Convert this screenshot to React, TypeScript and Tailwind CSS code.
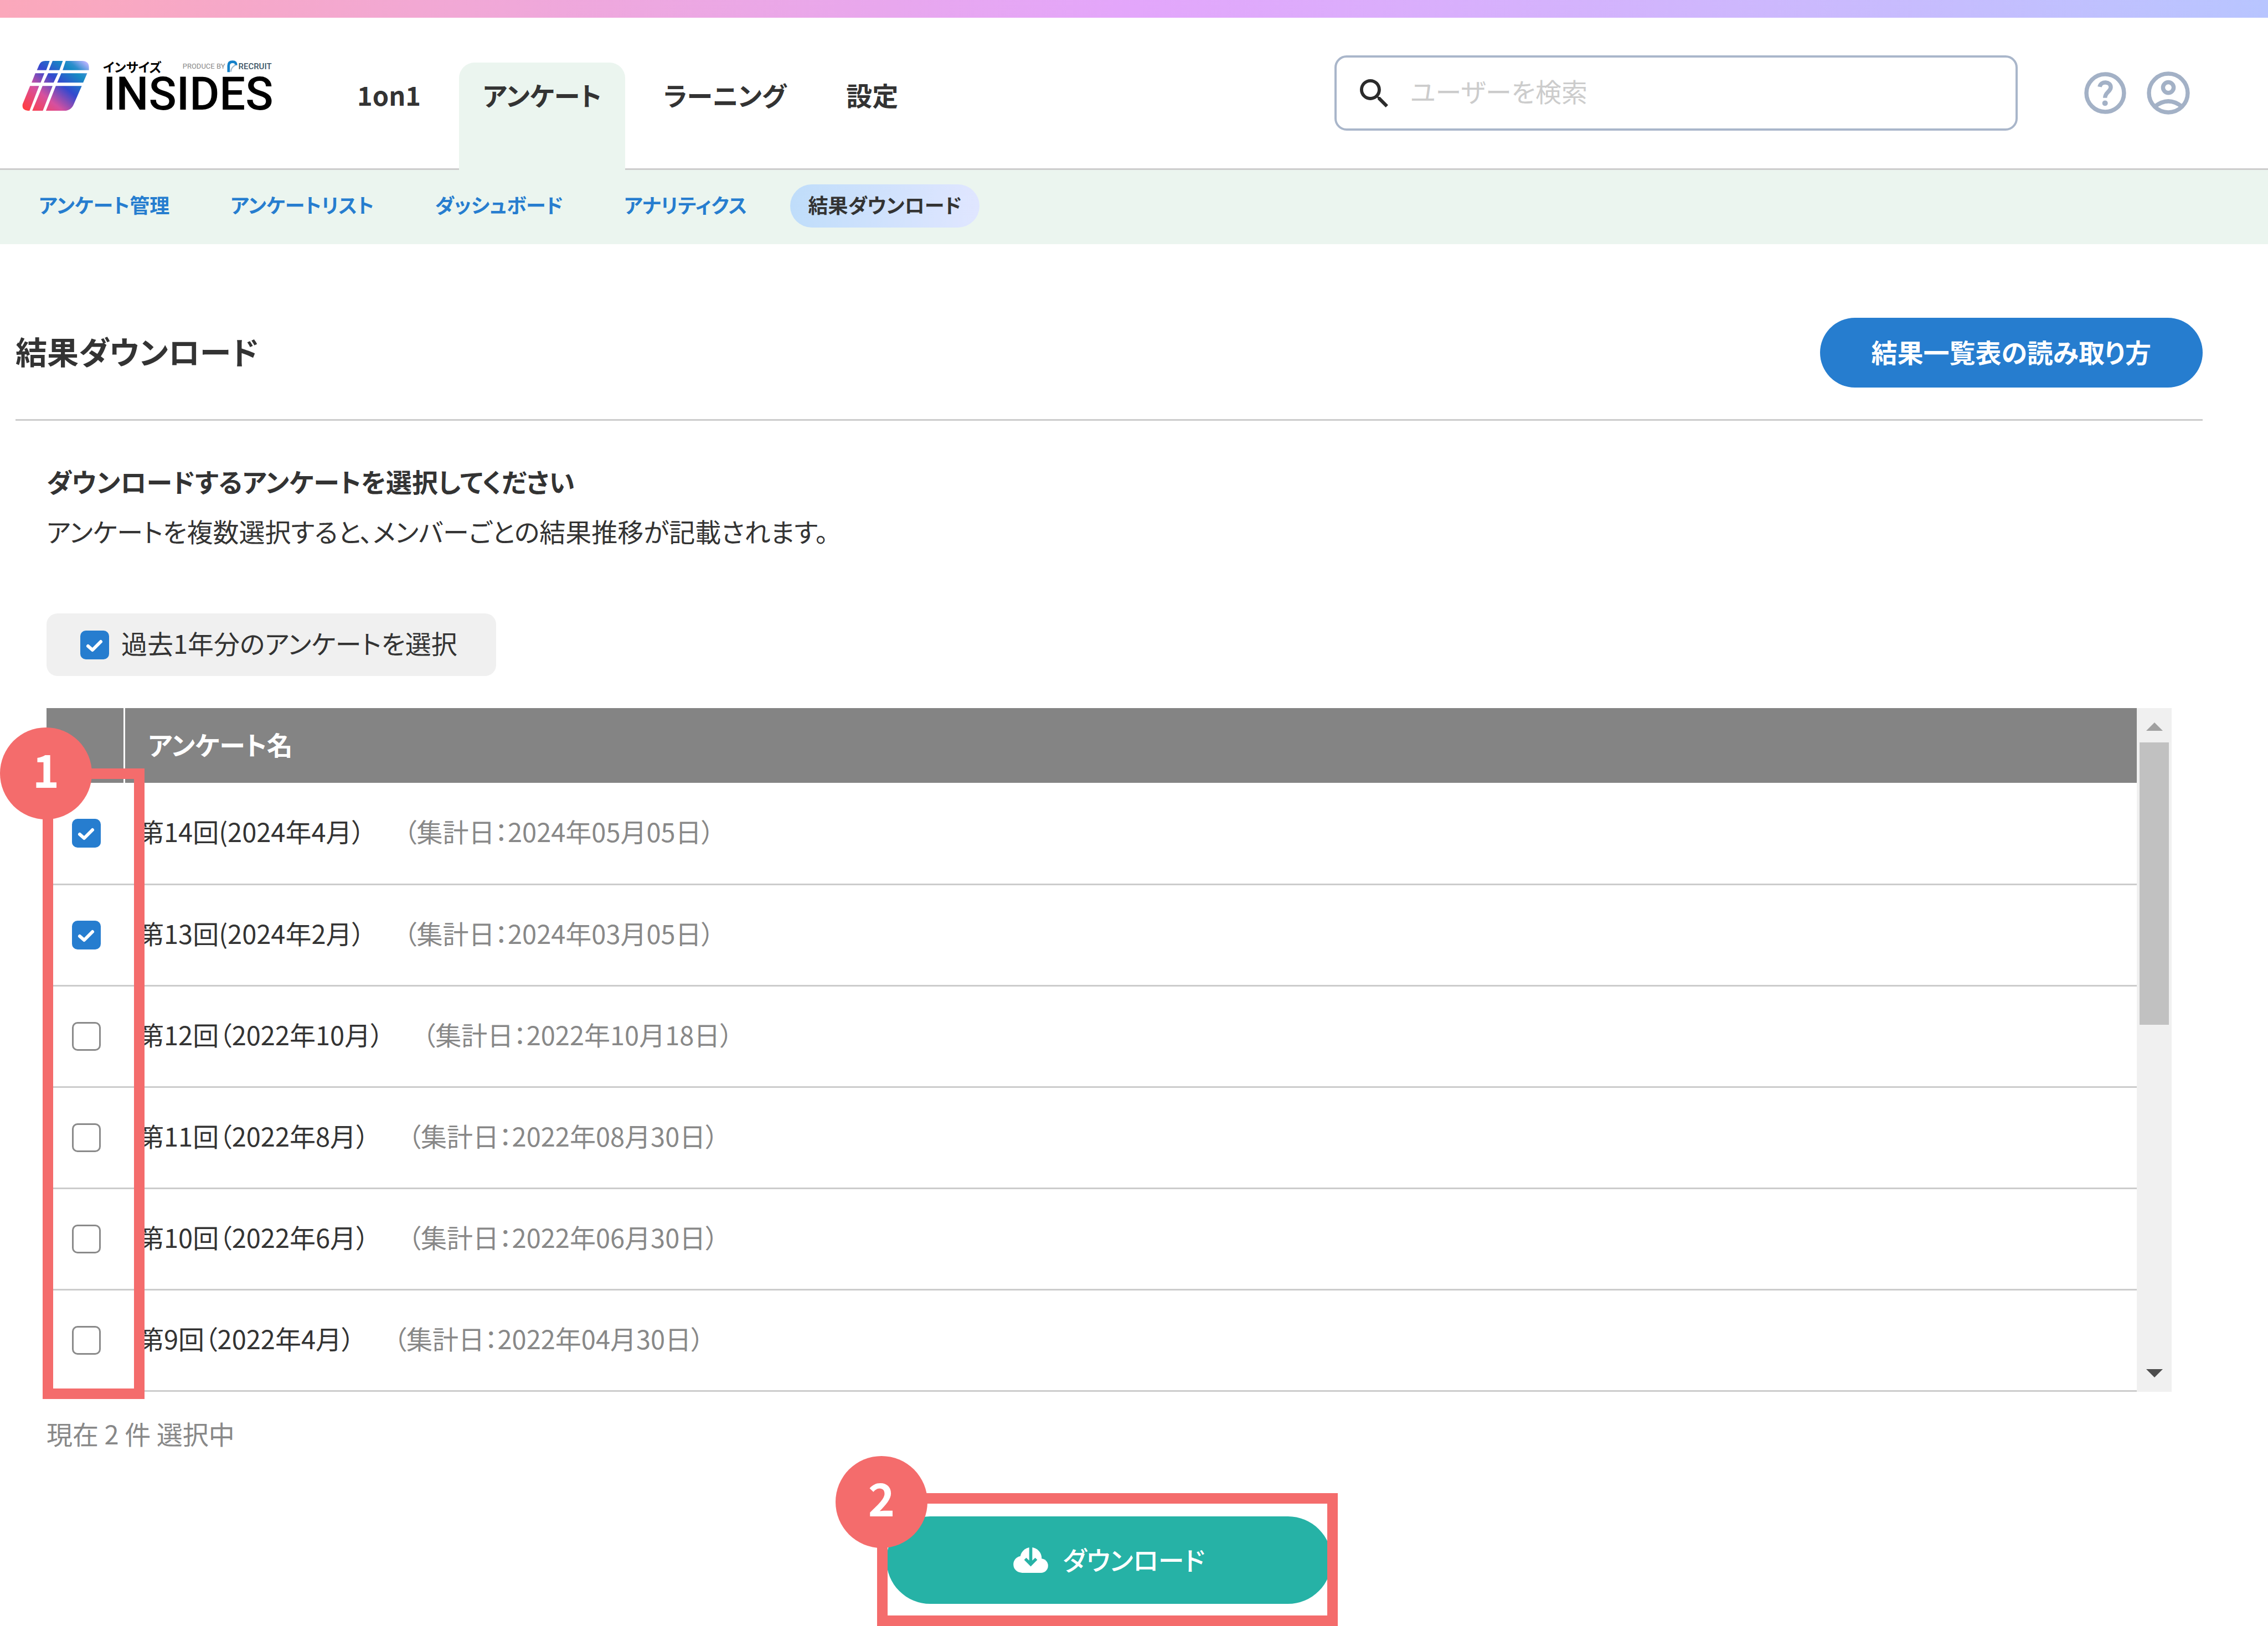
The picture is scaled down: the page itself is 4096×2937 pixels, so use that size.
import { useState } from "react";

const mainNav = ["1on1", "アンケート", "ラーニング", "設定"];
const subNav = ["アンケート管理", "アンケートリスト", "ダッシュボード", "アナリティクス", "結果ダウンロード"];

const surveys = [
  { id: "s14", name: "第14回(2024年4月）", date: "（集計日：2024年05月05日）", checked: true },
  { id: "s13", name: "第13回(2024年2月）", date: "（集計日：2024年03月05日）", checked: true },
  { id: "s12", name: "第12回（2022年10月）", date: "（集計日：2022年10月18日）", checked: false },
  { id: "s11", name: "第11回（2022年8月）", date: "（集計日：2022年08月30日）", checked: false },
  { id: "s10", name: "第10回（2022年6月）", date: "（集計日：2022年06月30日）", checked: false },
  { id: "s9", name: "第9回（2022年4月）", date: "（集計日：2022年04月30日）", checked: false },
];

function LogoMark() {
  return (
    <svg viewBox="0 0 390 292" className="h-[90px] w-[121px] shrink-0" aria-hidden="true">
      <defs>
        <linearGradient id="mark" gradientUnits="userSpaceOnUse" x1="50" y1="310" x2="330" y2="-30">
          <stop offset="0" stopColor="#ff3d42" />
          <stop offset="0.3" stopColor="#d6509f" />
          <stop offset="0.56" stopColor="#3349cf" />
          <stop offset="0.8" stopColor="#168bc4" />
          <stop offset="0.86" stopColor="#2f8fcd" />
          <stop offset="1" stopColor="#b9b4ff" />
        </linearGradient>
      </defs>
      <g fill="url(#mark)">
        <path d="M160 0 140 54H85L98 24Q108 0 134 0Z" />
        <path d="M177 0H237L217 54H155Z" />
        <path d="M254 0H350Q390 0 390 38V54H236Z" />
        <path d="M76 72H129L107 127H54Z" />
        <path d="M151 72H209L183 127H125Z" />
        <path d="M228 72H380L356 127H204Z" />
        <path d="M45 147H98L42 292H32Q-6 288 2 252Z" />
        <path d="M118 147H177L120 292H58Z" />
        <path d="M196 147H348L302 252Q286 292 246 292H138Z" />
      </g>
    </svg>
  );
}

function Logo() {
  return (
    <a href="#" aria-label="INSIDES" className="flex items-start gap-[25px] text-black">
      <LogoMark />
      <span className="flex flex-col">
        <span className="flex h-[20px] items-center">
          <span className="text-[23px] leading-[20px] font-bold">インサイズ</span>
          <span className="ml-[38px] flex items-center font-['Roboto']">
            <span className="text-[13px] leading-[16px] text-[#888]">PRODUCE BY</span>
            <svg viewBox="0 0 64 70" className="ml-[4px] h-[22px] w-[20px]" aria-hidden="true">
              <path d="M9 68V30Q9 8 32 8Q54 8 52 28" fill="none" stroke="#1380c9" strokeWidth="15" />
              <path d="M22 66Q24 36 52 26" fill="none" stroke="#9db6c9" strokeWidth="7" />
            </svg>
            <span className="text-[15px] leading-[16px] font-medium text-[#3d5566]">RECRUIT</span>
          </span>
        </span>
        <span className="font-['Roboto'] text-[83px] leading-[80px] font-medium">INSIDES</span>
      </span>
    </a>
  );
}

function Check({ id, label, checked, onChange }: { id: string; label?: string; checked: boolean; onChange: () => void }) {
  return (
    <span className="grid size-[52px] shrink-0">
      <input
        id={id}
        type="checkbox"
        aria-label={label}
        checked={checked}
        onChange={onChange}
        className="col-start-1 row-start-1 size-[52px] appearance-none rounded-[10px] border-[3px] border-[#8a8a8a] bg-white checked:border-[#267dcf] checked:bg-[#267dcf]"
      />
      {checked && (
        <svg viewBox="0 0 52 52" className="pointer-events-none col-start-1 row-start-1 size-[52px]" aria-hidden="true">
          <path d="M14 28 22 35 37 20" fill="none" stroke="#fff" strokeWidth="6" strokeLinejoin="round" strokeLinecap="round" />
        </svg>
      )}
    </span>
  );
}

function Step({ n, className }: { n: number; className: string }) {
  return (
    <span className={"absolute flex size-[166px] items-center justify-center rounded-full bg-[#f46c6c] pb-[18px] text-[82px] leading-[82px] font-bold text-white " + className}>
      {n}
    </span>
  );
}

export default function App() {
  const [rows, setRows] = useState(surveys);
  const [year, setYear] = useState(true);
  const toggle = (id: string) => setRows(rows.map((r) => (r.id === id ? { ...r, checked: !r.checked } : r)));
  const count = rows.filter((r) => r.checked).length;

  return (
    <div className="min-h-screen overflow-x-hidden bg-white font-['Noto_Sans_CJK_JP',sans-serif] text-[#333] [font-feature-settings:'palt']">
      <div className="h-[32px] bg-linear-to-r from-[#fba8bb] via-[#e3a6fb] to-[#b8c5ff]" />

      <header className="flex h-[275px] items-start border-b-[3px] border-[#ccc] pr-[141px] pl-[40px]">
        <div className="w-[566px] shrink-0 pt-[78px]">
          <Logo />
        </div>
        <nav className="flex gap-[30px] pt-[81px] text-[47px] leading-[66px] font-bold">
          {mainNav.map((t) => (
            <a
              key={t}
              href="#"
              className={
                t === "アンケート"
                  ? "h-[195px] rounded-t-[28px] bg-[#ebf5ef] px-[43px] pt-[25px] whitespace-nowrap"
                  : "h-[195px] px-[39px] pt-[25px] whitespace-nowrap"
              }
            >
              {t}
            </a>
          ))}
        </nav>
        <div className="ml-auto flex items-center pt-[68px]">
          <label className="flex h-[136px] w-[1234px] items-center gap-[40px] rounded-[22px] border-[4px] border-[#a9b6ca] px-[42px]">
            <svg viewBox="3 3 17.5 17.5" className="size-[51px] shrink-0" aria-hidden="true">
              <path
                fill="#2b2b2b"
                d="M15.5 14h-.79l-.28-.27A6.471 6.471 0 0 0 16 9.5 6.5 6.5 0 1 0 9.5 16c1.61 0 3.09-.59 4.23-1.57l.27.28v.79l5 4.99L20.49 19l-4.99-5zm-6 0C7.01 14 5 11.99 5 9.5S7.01 5 9.5 5 14 7.01 14 9.5 11.99 14 9.5 14z"
              />
            </svg>
            <input
              type="search"
              aria-label="ユーザーを検索"
              placeholder="ユーザーを検索"
              className="h-[80px] min-w-0 flex-1 bg-transparent pb-[10px] text-[47px] outline-none placeholder:text-[#ccc]"
            />
          </label>
          <button type="button" aria-label="ヘルプ" className="ml-[120px]">
            <svg viewBox="0 0 244 244" className="size-[76px]" fill="none" stroke="#a3b1c6" strokeWidth="24" aria-hidden="true">
              <circle cx="122" cy="122" r="109" />
              <path d="M90 86C96 50 156 54 154 90C153 114 121 118 121 150" />
              <circle cx="121" cy="181" r="16" fill="#a3b1c6" stroke="none" />
            </svg>
          </button>
          <button type="button" aria-label="アカウント" className="ml-[37px]">
            <svg viewBox="0 0 252 252" className="size-[78px]" fill="none" stroke="#a3b1c6" strokeWidth="24" aria-hidden="true">
              <circle cx="126" cy="126" r="113" />
              <circle cx="126" cy="94" r="31" />
              <path d="M46 206Q126 142 206 206" />
            </svg>
          </button>
        </div>
      </header>

      <nav className="flex h-[134px] items-start gap-[46px] bg-[#ebf5ef] pt-[26px] pl-[38px] text-[36px] leading-[72px] font-bold">
        {subNav.map((t) => (
          <a
            key={t}
            href="#"
            className={
              t === "結果ダウンロード"
                ? "rounded-full bg-linear-to-r from-[#bfddfa] to-[#e0e6ff] px-[32px] pb-[6px] whitespace-nowrap"
                : "px-[32px] whitespace-nowrap text-[#267dcf]"
            }
          >
            {t}
          </a>
        ))}
      </nav>

      <main className="pt-[133px] pr-[118px] pb-[40px] pl-[28px]">
        <div className="flex items-center justify-between border-b-[3px] border-[#ccc] pb-[57px]">
          <h1 className="pb-[8px] text-[57px] leading-[84px] font-bold">結果ダウンロード</h1>
          <button type="button" className="h-[126px] rounded-full bg-[#267dcf] px-[93px] pb-[4px] text-[47px] leading-[66px] font-bold whitespace-nowrap text-white">
            結果一覧表の読み取り方
          </button>
        </div>

        <section className="px-[56px] pt-[76px]">
          <h2 className="text-[47px] leading-[66px] font-bold">ダウンロードするアンケートを選択してください</h2>
          <p className="mt-[24px] text-[47px] leading-[66px]">アンケートを複数選択すると、メンバーごとの結果推移が記載されます。</p>

          <label htmlFor="year" className="mt-[116px] flex h-[113px] w-fit items-center gap-[22px] rounded-[20px] bg-[#f0f0f0] pr-[70px] pl-[61px] text-[47px] leading-[66px]">
            <Check id="year" checked={year} onChange={() => setYear(!year)} />
            <span className="pb-[8px]">過去1年分のアンケートを選択</span>
          </label>

          <div className="relative mt-[58px] flex">
            <table className="flex-1 border-collapse text-left text-[47px] leading-[66px]">
              <thead>
                <tr className="h-[135px] bg-[#848484] text-white">
                  <th className="w-[140px] border-r-[3px] border-white" aria-label="選択" />
                  <th className="pb-[6px] pl-[42px] font-bold">アンケート名</th>
                </tr>
              </thead>
              <tbody>
                {rows.map((r) => (
                  <tr key={r.id} className="h-[183px] border-b-[3px] border-[#ccc]">
                    <td className="pl-[46px]">
                      <Check id={r.id} label={r.name} checked={r.checked} onChange={() => toggle(r.id)} />
                    </td>
                    <td className="pb-[8px] pl-[25px] whitespace-nowrap">
                      <label htmlFor={r.id} className="flex gap-[70px]">
                        <span>{r.name}</span>
                        <span className="text-[#888]">{r.date}</span>
                      </label>
                    </td>
                  </tr>
                ))}
              </tbody>
            </table>
            <div className="flex w-[63px] flex-col items-center bg-[#f0f0f0]">
              <button type="button" aria-label="上へ" className="flex h-[62px] w-full items-center justify-center pt-[4px]">
                <svg viewBox="0 0 30 15" className="h-[15px] w-[30px]" aria-hidden="true">
                  <path d="M0 15 15 0 30 15Z" fill="#a0a0a0" />
                </svg>
              </button>
              <div className="h-[510px] w-[53px] bg-[#c1c1c1]" />
              <button type="button" aria-label="下へ" className="mt-auto flex h-[62px] w-full items-center justify-center pb-[4px]">
                <svg viewBox="0 0 30 15" className="h-[15px] w-[30px]" aria-hidden="true">
                  <path d="M0 0 15 15 30 0Z" fill="#4d4d4d" />
                </svg>
              </button>
            </div>
            <div className="pointer-events-none absolute top-[109px] -bottom-[13px] -left-[7px] w-[184px] border-[19px] border-[#f46c6c]" />
            <Step n={1} className="top-[35px] -left-[84px]" />
          </div>

          <p className="mt-[42px] text-[47px] leading-[66px] text-[#888]">現在 {count} 件 選択中</p>

          <div className="mt-[117px] flex justify-center">
            <div className="relative">
              <button type="button" className="flex h-[158px] w-[804px] items-center justify-center gap-[26px] rounded-full bg-[#26b2a6] text-[47px] leading-[66px] font-medium text-white">
                <svg viewBox="0 0 200 147" className="h-[46px] w-[63px]" aria-hidden="true">
                  <g fill="#fff">
                    <circle cx="48" cy="98" r="48" />
                    <circle cx="101" cy="62" r="62" />
                    <circle cx="159" cy="106" r="41" />
                    <path d="M48 100H159V147H48Z" />
                  </g>
                  <path d="M91 -2H109V76L126 60L138 72L100 110L62 72L74 60L91 76Z" fill="#26b2a6" />
                </svg>
                <span className="pb-[4px]">ダウンロード</span>
              </button>
              <div className="pointer-events-none absolute -top-[42px] -right-[11px] -bottom-[40px] -left-[17px] border-[19px] border-[#f46c6c]" />
              <Step n={2} className="-top-[109px] -left-[92px]" />
            </div>
          </div>
        </section>
      </main>
    </div>
  );
}
